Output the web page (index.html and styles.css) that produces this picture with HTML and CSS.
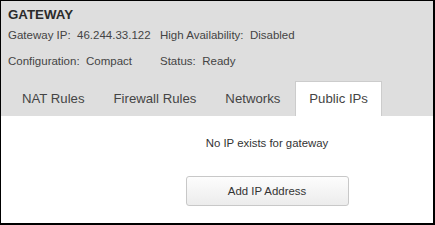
FILE: index.html
```html
<!DOCTYPE html>
<html>
<head>
<meta charset="utf-8">
<link rel="stylesheet" href="styles.css">
</head>
<body>
<div class="frame">
  <div class="header">
    <div class="title">GATEWAY</div>
    <div class="info-row">
      <span class="info">Gateway IP:&nbsp; 46.244.33.122</span>
      <span class="info">High Availability:&nbsp; Disabled</span>
    </div>
    <div class="info-row">
      <span class="info">Configuration:&nbsp; Compact</span>
      <span class="info">Status:&nbsp; Ready</span>
    </div>
    <div class="tabs">
      <div class="tab">NAT Rules</div>
      <div class="tab">Firewall Rules</div>
      <div class="tab">Networks</div>
      <div class="tab active">Public IPs</div>
    </div>
  </div>
  <div class="content">
    <div class="empty">No IP exists for gateway</div>
    <button class="btn">Add IP Address</button>
  </div>
</div>
</body>
</html>
```
FILE: styles.css
```css
html, body {
  margin: 0;
  padding: 0;
  background: #ffffff;
}
body {
  font-family: "Liberation Sans", Arial, sans-serif;
  color: #333;
}
.frame {
  width: 435px;
  height: 225px;
  box-sizing: border-box;
  border-top: 1px solid #000;
  border-left: 1px solid #000;
  border-right: 2px solid #000;
  border-bottom: 2px solid #000;
  display: flex;
  flex-direction: column;
  overflow: hidden;
}
.header {
  background: #dedede;
  padding: 6px 0 0 7px;
}
.title {
  font-weight: bold;
  font-size: 13.3px;
  line-height: 16px;
  color: #2b2b2b;
}
.info-row {
  display: grid;
  grid-template-columns: 152px auto;
  font-size: 11.5px;
  line-height: 13px;
  margin-top: 5.5px;
  color: #444;
}
.info-row + .info-row {
  margin-top: 13px;
}
.tabs {
  display: flex;
  margin-top: 13.5px;
  height: 35px;
}
.tab {
  font-size: 13.2px;
  padding: 0 13px;
  line-height: 34px;
  color: #444;
  border: 1px solid transparent;
  border-bottom: none;
  margin-right: 1px;
}
.tab.active {
  background: #fff;
  border-color: #cccccc;
}
.content {
  flex: 1;
  background: #fff;
  display: flex;
  flex-direction: column;
  align-items: center;
  padding-left: 100px;
}
.empty {
  font-size: 11.4px;
  color: #333;
  margin-top: 21px;
}
.btn {
  margin-top: 27px;
  width: 163px;
  height: 30px;
  border: 1px solid #c8c8c8;
  border-radius: 3px;
  background: linear-gradient(#fdfdfd, #ececec);
  font-family: "Liberation Sans", Arial, sans-serif;
  font-size: 11.4px;
  color: #333;
}
```
